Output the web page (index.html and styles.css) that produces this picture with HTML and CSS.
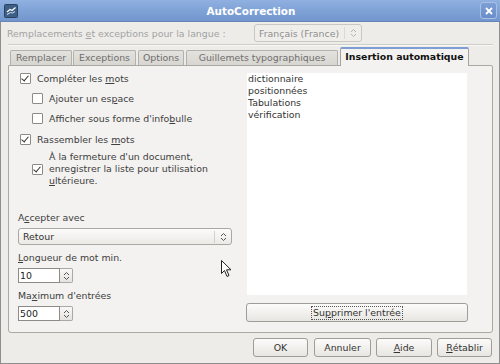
FILE: index.html
```html
<!DOCTYPE html>
<html lang="fr">
<head>
    <meta charset="utf-8" />
    <title>AutoCorrection</title>
    <link rel="stylesheet" href="styles.css">
</head>
<body>
<div class="window">
    <!-- Title bar -->
    <div class="titlebar">
        <svg class="app-icon" width="14" height="14" viewBox="0 0 14 14">
            <rect x="0.5" y="0.5" width="13" height="13" rx="1" fill="#3d5f86" stroke="#2a4260"/>
            <path d="M3 8 L6 5.5 L8 6.5 L11.5 3.5" stroke="#fff" stroke-width="1.3" fill="none"/>
            <path d="M3 10.5 L6.5 8.5 L8.5 9 L11 7.5" stroke="#dfe8f2" stroke-width="1" fill="none"/>
        </svg>
        <div class="title">AutoCorrection</div>
        <div class="close-btn">
            <svg width="8" height="8" viewBox="0 0 8 8">
                <path d="M1 1 L7 7 M7 1 L1 7" stroke="#fff" stroke-width="1.8"/>
            </svg>
        </div>
    </div>

    <div class="content">
        <div class="lang-row">
            <span class="disabled">Remplacements <u>e</u>t exceptions pour la langue :</span>
            <div class="combo combo-disabled">
                <span>Français (France)</span>
                <span class="combo-arrows">
                    <svg width="7" height="10" viewBox="0 0 7 10">
                        <path d="M1 4 L3.5 1.5 L6 4 M1 6 L3.5 8.5 L6 6" stroke="#b5b5b5" stroke-width="1" fill="none"/>
                    </svg>
                </span>
            </div>
        </div>
        <div class="separator"></div>

        <!-- Tabs -->
        <div class="tabs">
            <div class="tab tab-replace">Remplacer</div>
            <div class="tab tab-except">Exceptions</div>
            <div class="tab tab-options">Options</div>
            <div class="tab tab-quotes">Guillemets typographiques</div>
            <div class="tab active">Insertion automatique</div>
        </div>

        <div class="panel">
            <div class="left-col">
                <div class="opt">
                    <span class="check on"></span>
                    <span>Compléter les <u>m</u>ots</span>
                </div>
                <div class="opt sub">
                    <span class="check"></span>
                    <span>Ajouter un es<u>p</u>ace</span>
                </div>
                <div class="opt sub">
                    <span class="check"></span>
                    <span>Afficher sous forme d'info<u>b</u>ulle</span>
                </div>
                <div class="opt group">
                    <span class="check on"></span>
                    <span>Rassembler les <u>m</u>ots</span>
                </div>
                <div class="opt sub multi">
                    <span class="check on"></span>
                    <span>À la fermeture d'un document,<br>enregistrer la liste pour utilisation<br><u>u</u>ltérieure.</span>
                </div>

                <div class="field-label first">A<u>c</u>cepter avec</div>
                <div class="combo combo-wide">
                    <span>Retour</span>
                    <span class="combo-arrows">
                        <svg width="7" height="10" viewBox="0 0 7 10">
                            <path d="M1 4 L3.5 1.5 L6 4 M1 6 L3.5 8.5 L6 6" stroke="#555" stroke-width="1" fill="none"/>
                        </svg>
                    </span>
                </div>

                <div class="field-label"><u>L</u>ongueur de mot min.</div>
                <div class="spin">
                    <span class="spin-value">10</span>
                    <span class="spin-btn">
                        <svg width="7" height="10" viewBox="0 0 7 10">
                            <path d="M1 4 L3.5 1.5 L6 4 M1 6 L3.5 8.5 L6 6" stroke="#555" stroke-width="1" fill="none"/>
                        </svg>
                    </span>
                </div>

                <div class="field-label">Ma<u>x</u>imum d'entrées</div>
                <div class="spin">
                    <span class="spin-value">500</span>
                    <span class="spin-btn">
                        <svg width="7" height="10" viewBox="0 0 7 10">
                            <path d="M1 4 L3.5 1.5 L6 4 M1 6 L3.5 8.5 L6 6" stroke="#555" stroke-width="1" fill="none"/>
                        </svg>
                    </span>
                </div>
            </div>

            <div class="right-col">
                <div class="word-list">
                    <div>dictionnaire</div>
                    <div>positionnées</div>
                    <div>Tabulations</div>
                    <div>vérification</div>
                </div>
                <div class="button delete-btn"><span class="focus">Su<u>p</u>primer l'entrée</span></div>
            </div>
        </div>

        <div class="button-row">
            <div class="button btn-ok">OK</div>
            <div class="button btn-cancel">Annuler</div>
            <div class="button btn-help"><u>A</u>ide</div>
            <div class="button btn-reset"><u>R</u>établir</div>
        </div>
    </div>

    <!-- Mouse pointer over the dialog -->
    <svg class="pointer" width="12" height="18" viewBox="0 0 12 18">
        <path d="M0.5 0.5 L0.5 13.5 L3.5 10.5 L6 16.5 L8 15.5 L5.5 9.8 L10 9.8 Z" fill="#fff" stroke="#222" stroke-width="1"/>
    </svg>
</div>
</body>
</html>
```

FILE: styles.css
```css
body {
    margin: 0;
    font-family: "DejaVu Sans", sans-serif;
    font-size: 9.4px;
    color: #404040;
}
u {
    text-decoration: underline;
    text-underline-offset: 1px;
}
.window {
    position: relative;
    width: 500px;
    height: 364px;
    box-sizing: border-box;
    background-color: #edece9;
    border: 1px solid #8e8e8e;
    border-top: none;
    display: flex;
    flex-direction: column;
    white-space: nowrap;
}
/* Title bar */
.titlebar {
    height: 22px;
    flex: none;
    display: flex;
    align-items: center;
    padding: 0 3px 0 4px;
    background: linear-gradient(#8fb0e0, #7195cd);
    border-bottom: 1px solid #6885b5;
    box-sizing: border-box;
    margin: 0 -1px;
}
.app-icon {
    flex: none;
}
.title {
    flex: 1;
    text-align: center;
    color: #fff;
    font-weight: bold;
    font-size: 10.4px;
    padding-left: 4px;
}
.close-btn {
    width: 15px;
    height: 15px;
    border: 1px solid #a9c0e4;
    border-radius: 3px;
    background: linear-gradient(#7d9fd6, #6a8ec8);
    display: flex;
    align-items: center;
    justify-content: center;
}
.content {
    flex: 1;
    display: flex;
    flex-direction: column;
    padding: 0 6px 0 7px;
}
.lang-row {
    height: 22px;
    display: flex;
    align-items: center;
}
.disabled {
    color: #a3a3a3;
    width: 247px;
    padding-left: 0;
    margin-left: -1px;
}
.separator {
    border-top: 1px solid #cfcdc8;
    border-bottom: 1px solid #f8f8f7;
}
/* Combo boxes */
.combo {
    display: flex;
    align-items: center;
    justify-content: space-between;
    box-sizing: border-box;
    border: 1px solid #aaa8a3;
    border-radius: 3px;
    background: linear-gradient(#fbfbfa, #eceae6);
    padding-left: 4px;
}
.combo-disabled {
    width: 108px;
    height: 18px;
    color: #8f8f8f;
    border-color: #cac8c3;
    background: #efeeeb;
}
.combo-wide {
    width: 214px;
    height: 17px;
    color: #333;
}
.combo-arrows {
    display: flex;
    align-items: center;
    height: 12px;
    padding: 0 4px 0 5px;
    border-left: 1px solid #d2d0cb;
}
.combo-disabled .combo-arrows {
    border-left-color: #dcdad6;
}
/* Tabs */
.tabs {
    display: flex;
    align-items: flex-end;
    margin-top: 1px;
    padding-left: 2px;
    height: 18px;
    position: relative;
    z-index: 1;
}
.tab {
    flex: none;
    box-sizing: border-box;
    height: 15px;
    line-height: 14px;
    text-align: center;
    background: linear-gradient(#e4e2de, #d8d6d1);
    border: 1px solid #b3b1ab;
    border-bottom: none;
    border-radius: 2px 2px 0 0;
    color: #6e6e6e;
    margin-right: 1px;
}
.tab-replace { width: 62px; }
.tab-except { width: 63px; margin-right: 2px; }
.tab-options { width: 46px; margin-right: 2px; }
.tab-quotes { width: 152px; margin-right: 2px; }
.tab.active {
    width: 129px;
    height: 19px;
    line-height: 16px;
    color: #111;
    font-weight: bold;
    background: #f3f2f0;
    border-color: #a5a39e;
    border-top: 2px solid #7e9ed3;
    margin-bottom: -1px;
}
.panel {
    height: 268px;
    box-sizing: border-box;
    border: 1px solid #aaa8a3;
    border-radius: 0 2px 3px 3px;
    background: #f3f2f0;
    display: flex;
    padding: 2px 0 0 9px;
}
.left-col {
    width: 228px;
    display: flex;
    flex-direction: column;
}
.opt {
    height: 20px;
    display: flex;
    align-items: center;
    gap: 6px;
    padding-left: 2px;
}
.opt.sub {
    padding-left: 14px;
}
.opt.group {
    margin-top: 1px;
}
.opt.multi {
    height: auto;
    margin-top: 2px;
    line-height: 12px;
}
.check {
    width: 9px;
    height: 9px;
    flex: none;
    border: 1px solid #8d8b87;
    border-radius: 1px;
    background: #fff;
    position: relative;
}
.check.on::after {
    content: "";
    position: absolute;
    left: 2px;
    top: 0;
    width: 3px;
    height: 6px;
    border: solid #333;
    border-width: 0 1.5px 1.5px 0;
    transform: rotate(40deg);
}
.field-label {
    margin-top: 6px;
    height: 13px;
    line-height: 13px;
    margin-bottom: 4px;
}
.field-label.first {
    margin-top: 24px;
}
/* Spin buttons */
.spin {
    display: flex;
    height: 15px;
    width: 56px;
}
.spin-value {
    width: 42px;
    box-sizing: border-box;
    border: 1px solid #8d8b87;
    background: #fff;
    line-height: 13px;
    padding-left: 1px;
    color: #222;
}
.spin-btn {
    width: 13px;
    box-sizing: border-box;
    border: 1px solid #aaa8a3;
    border-left: none;
    border-radius: 0 2px 2px 0;
    background: linear-gradient(#f8f8f7, #e5e3df);
    display: flex;
    align-items: center;
    justify-content: center;
}
.right-col {
    display: flex;
    flex-direction: column;
    width: 222px;
}
.word-list {
    height: 222px;
    margin-top: 5px;
    margin-left: 1px;
    width: 220px;
    background: #fff;
    line-height: 12px;
    padding: 0 0 0 1px;
    box-sizing: border-box;
    color: #333;
}
/* Buttons */
.button {
    box-sizing: border-box;
    height: 19px;
    display: flex;
    align-items: center;
    justify-content: center;
    border: 1px solid #9f9d98;
    border-radius: 3px;
    background: linear-gradient(#fbfbfa, #e8e6e2);
    color: #333;
}
.delete-btn {
    margin-top: 8px;
    width: 222px;
}
.focus {
    outline: 1px dotted #555;
    padding: 0 1px;
    line-height: 12px;
}
.button-row {
    display: flex;
    justify-content: flex-end;
    gap: 5px;
    margin-top: 5px;
    padding-right: 1px;
}
.btn-ok {
    width: 55px;
}
.btn-cancel {
    width: 57px;
    margin-left: 1px;
}
.btn-help {
    width: 56px;
}
.btn-reset {
    width: 55px;
}
.pointer {
    position: absolute;
    left: 220px;
    top: 260px;
}
```
